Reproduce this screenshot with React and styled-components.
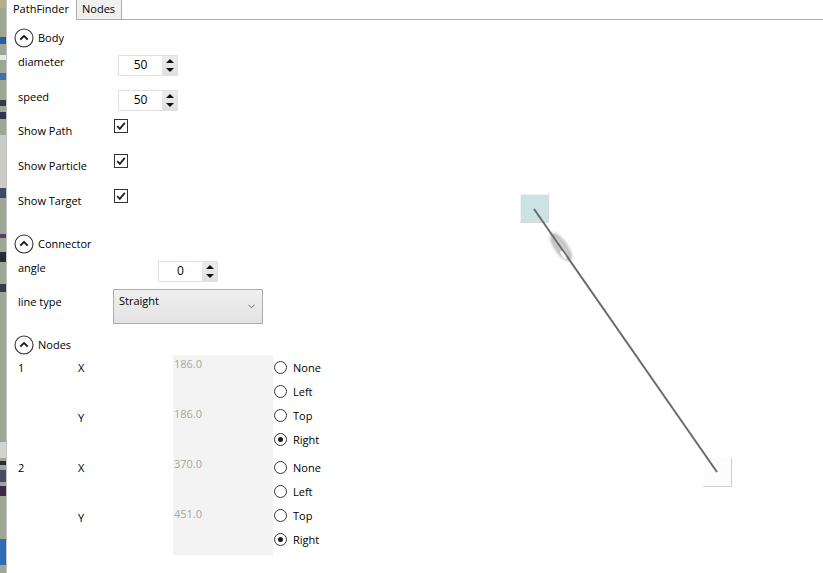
import React from "react";
import styled, { createGlobalStyle } from "styled-components";

const GlobalStyle = createGlobalStyle`
  html, body {
    margin: 0;
    padding: 0;
    background: #fff;
  }
  body {
    font-family: "Open Sans", "Segoe UI", sans-serif;
    font-size: 11px;
    color: #000;
  }
`;

// window behind the tool, only a sliver of it shows on the left
const STRIP = [
  [8, "#b3ad8a"], [29, null], [7, "#2d5c9c"], [11, null], [5, "#e4e6e8"],
  [13, null], [7, "#3f6fb5"], [20, null], [6, "#3a3a48"], [6, null],
  [7, "#33334a"], [16, null], [53, "#c9ccc4"], [10, "#3c4a6a"], [36, null],
  [4, "#5a3c6a"], [14, null], [10, "#2a2a38"], [22, null], [8, "#3a3a4a"],
  [150, null], [16, "#d2d4cf"], [3, null], [4, "#2a2a3a"], [5, null],
  [12, "#4a4a6a"], [4, null], [10, "#3a2a4a"], [43, null], [26, "#2f6cb8"],
];

const Window = styled.div`
  display: flex;
  width: 823px;
  height: 573px;
  overflow: hidden;
  background: #fff;
`;

const Strip = styled.div`
  flex: none;
  width: 6px;
  display: flex;
  flex-direction: column;
  background: #a0a696;
  border-right: 1px solid #c4c4c4;
`;

const StripBit = styled.div`
  flex: none;
  height: ${p => p.$h}px;
  background: ${p => p.$color || "transparent"};
`;

const Main = styled.div`
  flex: 1;
  display: flex;
  flex-direction: column;
  padding-left: 1px;
`;

const TabBar = styled.div`
  display: flex;
  height: 20px;
  flex: none;
`;

const Tab = styled.div`
  box-sizing: border-box;
  height: 20px;
  line-height: 18px;
  padding: 0 6px 0 5px;
  background: ${p => (p.$active ? "#fff" : "#f0f0f0")};
  border-right: 1px solid ${p => (p.$active ? "transparent" : "#acacac")};
  border-bottom: 1px solid ${p => (p.$active ? "transparent" : "#acacac")};
  border-left: ${p => (p.$active ? "none" : "1px solid #acacac")};
  color: #000;
  font-size: 11px;
`;

const TabFill = styled.div`
  flex: 1;
  border-bottom: 1px solid #acacac;
`;

const Content = styled.div`
  flex: 1;
  display: flex;
`;

const Form = styled.div`
  width: 330px;
  flex: none;
  display: flex;
  flex-direction: column;
`;

const SectionHeader = styled.div`
  display: flex;
  align-items: center;
  gap: 4px;
  height: 20px;
  padding-left: 6px;
  margin-top: ${p => p.$gap}px;
  font-size: 11px;
`;

const HeaderText = styled.span`
  line-height: 15px;
  margin-top: -2px;
`;

const FieldRow = styled.div`
  display: grid;
  grid-template-columns: ${p => p.$labelWidth}px auto;
  align-items: start;
  height: 35px;
  padding-left: 10px;
`;

const Label = styled.div`
  line-height: 15px;
  padding-top: ${p => p.$top}px;
  white-space: nowrap;
`;

const Control = styled.div`
  margin-top: ${p => p.$top}px;
`;

const NumBox = styled.div`
  box-sizing: border-box;
  display: flex;
  width: 60px;
  height: 21px;
  border: 1px solid #e1e1e1;
  background: #fff;
`;

const NumText = styled.div`
  flex: 1;
  text-align: center;
  font-size: 12px;
  line-height: 18px;
`;

const Spinner = styled.div`
  width: 15px;
  display: flex;
  flex-direction: column;
  background: linear-gradient(#ececec, #e0e0e0);
`;

const SpinHalf = styled.div`
  flex: 1;
  display: flex;
  align-items: center;
  justify-content: center;
  &::after {
    content: "";
    border-left: 4px solid transparent;
    border-right: 4px solid transparent;
    ${p => (p.$up ? "border-bottom: 4px solid #111;" : "border-top: 4px solid #111;")}
  }
`;

const Check = styled.div`
  box-sizing: border-box;
  width: 14px;
  height: 14px;
  border: 1px solid #333;
  background: #fff;
  display: flex;
  align-items: center;
  justify-content: center;
`;

const Combo = styled.div`
  box-sizing: border-box;
  position: relative;
  width: 150px;
  height: 35px;
  border: 1px solid #acacac;
  background: linear-gradient(#efefef, #e3e3e3);
  padding: 3px 0 0 5px;
  line-height: 15px;
`;

const ComboArrow = styled.svg`
  position: absolute;
  right: 7px;
  top: 14px;
`;

const NodeBlock = styled.div`
  display: grid;
  grid-template-columns: 60px 95px 100px auto;
  grid-template-rows: 50px 50px;
  padding-left: 10px;
`;

const NodeCell = styled.div`
  grid-column: ${p => p.$col};
  grid-row: ${p => p.$row};
  line-height: 15px;
  padding-top: 5px;
`;

const ValueCell = styled.div`
  grid-column: 3;
  grid-row: ${p => p.$row};
  background: #f3f3f3;
  color: #a3a8a0;
  line-height: 15px;
  padding: 1px 0 0 1px;
`;

const RadioList = styled.div`
  grid-column: 4;
  grid-row: 1 / span 2;
  display: flex;
  flex-direction: column;
`;

const RadioItem = styled.div`
  display: flex;
  align-items: center;
  gap: 6px;
  height: 24px;
  padding-left: 1px;
`;

const RadioDot = styled.div`
  box-sizing: border-box;
  width: 13px;
  height: 13px;
  border-radius: 50%;
  border: 1px solid #333;
  background: #fff;
  display: flex;
  align-items: center;
  justify-content: center;
  &::after {
    content: "";
    width: 5px;
    height: 5px;
    border-radius: 50%;
    background: ${p => (p.$on ? "#1a1a1a" : "transparent")};
  }
`;

const Canvas = styled.svg`
  flex: 1;
  display: block;
`;

const ExpandIcon = () => (
  <svg width="20" height="20" viewBox="0 0 20 20">
    <circle cx="10" cy="10" r="9" fill="none" stroke="#333" strokeWidth="1.1" />
    <path d="M6.3 11.6 L10 7.9 L13.7 11.6" fill="none" stroke="#111" strokeWidth="1.8" />
  </svg>
);

const Section = ({ title, gap }) => (
  <SectionHeader $gap={gap}>
    <ExpandIcon />
    <HeaderText>{title}</HeaderText>
  </SectionHeader>
);

const NumberField = ({ label, value, labelWidth }) => (
  <FieldRow $labelWidth={labelWidth}>
    <Label $top={6}>{label}</Label>
    <Control $top={7}>
      <NumBox>
        <NumText>{value}</NumText>
        <Spinner>
          <SpinHalf $up />
          <SpinHalf />
        </Spinner>
      </NumBox>
    </Control>
  </FieldRow>
);

const CheckField = ({ label }) => (
  <FieldRow $labelWidth={96}>
    <Label $top={5}>{label}</Label>
    <Control $top={1}>
      <Check>
        <svg width="10" height="10" viewBox="0 0 10 10">
          <path d="M1.2 5.2 L3.8 7.8 L8.8 1.8" fill="none" stroke="#222" strokeWidth="1.8" />
        </svg>
      </Check>
    </Control>
  </FieldRow>
);

const Radio = ({ label, on }) => (
  <RadioItem>
    <RadioDot $on={on} />
    <span>{label}</span>
  </RadioItem>
);

const Node = ({ id, x, y }) => (
  <NodeBlock>
    <NodeCell $col={1} $row={1}>{id}</NodeCell>
    <NodeCell $col={2} $row={1}>X</NodeCell>
    <NodeCell $col={2} $row={2}>Y</NodeCell>
    <ValueCell $row={1}>{x}</ValueCell>
    <ValueCell $row={2}>{y}</ValueCell>
    <RadioList>
      <Radio label="None" />
      <Radio label="Left" />
      <Radio label="Top" />
      <Radio label="Right" on />
    </RadioList>
  </NodeBlock>
);

export default function App() {
  return (
    <Window>
      <GlobalStyle />
      <Strip>
        {STRIP.map(([h, color], i) => (
          <StripBit key={i} $h={h} $color={color} />
        ))}
      </Strip>
      <Main>
        <TabBar>
          <Tab $active>PathFinder</Tab>
          <Tab>Nodes</Tab>
          <TabFill />
        </TabBar>
        <Content>
          <Form>
            <Section title="Body" gap={8} />
            <NumberField label="diameter" value="50" labelWidth={100} />
            <NumberField label="speed" value="50" labelWidth={100} />
            <CheckField label="Show Path" />
            <CheckField label="Show Particle" />
            <CheckField label="Show Target" />

            <Section title="Connector" gap={11} />
            <NumberField label="angle" value="0" labelWidth={140} />
            <FieldRow $labelWidth={95}>
              <Label $top={5}>line type</Label>
              <Combo>
                Straight
                <ComboArrow width="7" height="5" viewBox="0 0 7 5">
                  <path d="M0.5 0.8 L3.5 3.8 L6.5 0.8" fill="none" stroke="#666" strokeWidth="1" />
                </ComboArrow>
              </Combo>
            </FieldRow>

            <Section title="Nodes" gap={11} />
            <Node id="1" x="186.0" y="186.0" />
            <Node id="2" x="370.0" y="451.0" />
          </Form>

          {/* the view box uses page coordinates */}
          <Canvas viewBox="338 20 485 553" width="485" height="553">
            <defs>
              <filter id="soft" x="-50%" y="-50%" width="200%" height="200%">
                <feGaussianBlur stdDeviation="1.6" />
              </filter>
            </defs>
            <rect x="520" y="194" width="28" height="28" fill="#cde2e5" />
            <path d="M520 194.5 H548 M520.5 194 V222" stroke="#eef4f4" fill="none" />
            <path d="M548.5 194 V222.5 H520" stroke="#d6dada" fill="none" />

            <rect x="703" y="458" width="29" height="29" fill="#fcfcfc" />
            <path d="M731.5 458 V486.5 H703" stroke="#cfcfcf" fill="none" />

            <g transform="translate(561 247) rotate(55)" filter="url(#soft)">
              <ellipse rx="16" ry="6" fill="#b4b4b4" opacity="0.6" />
              <ellipse rx="15" ry="5" fill="none" stroke="#7a7a7a" strokeWidth="1.4" opacity="0.7" />
            </g>
            <line x1="534" y1="209" x2="717" y2="472" stroke="#6b6b6b" strokeWidth="2" />
            <g transform="translate(561 247) rotate(55)">
              <ellipse cx="8" cy="2.6" rx="5" ry="1.5" fill="#fff" opacity="0.9" />
            </g>
          </Canvas>
        </Content>
      </Main>
    </Window>
  );
}
